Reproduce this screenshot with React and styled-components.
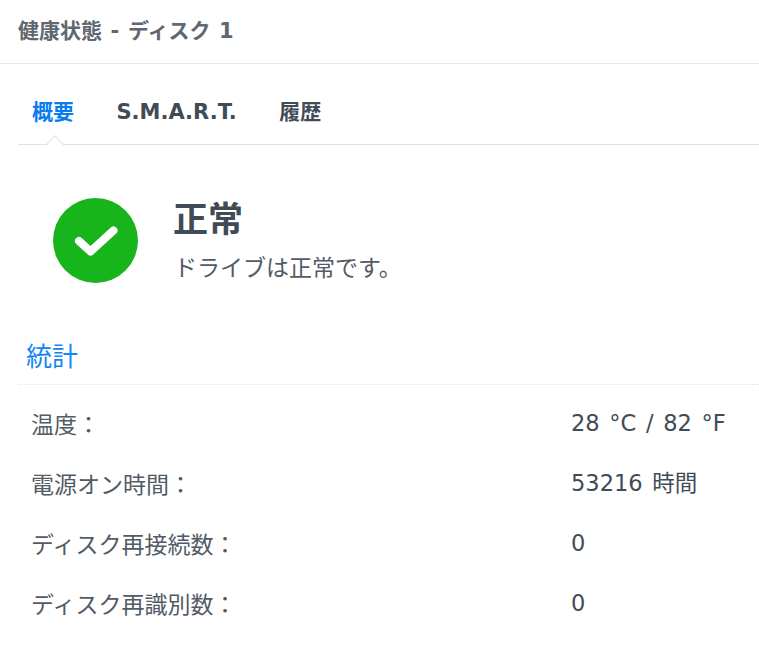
import React from 'react';
import styled, { createGlobalStyle } from 'styled-components';

const GlobalStyle = createGlobalStyle`
  html, body {
    margin: 0;
    padding: 0;
    background: #fff;
    overflow: hidden;
  }
  body {
    font-family: "DejaVu Sans", "Noto Sans CJK JP", sans-serif;
    color: #414b55;
  }
`;

const Page = styled.div`
  width: 759px;
  height: 645px;
  overflow: hidden;
`;

const Header = styled.div`
  height: 58px;
  padding: 0 0 5px 18px;
  display: flex;
  align-items: center;
  border-bottom: 1px solid #e3e8ef;
  font-size: 21px;
  font-weight: 700;
  word-spacing: 1.3px;
  color: #5f6770;
`;

const Body = styled.div`
  padding-left: 18px;
`;

const Tabs = styled.div`
  height: 81px;
  display: flex;
  align-items: flex-end;
  gap: 42.5px;
  padding: 0 0 20px 14px;
  box-sizing: border-box;
  border-bottom: 1px solid #d9e2ec;
  position: relative;
`;

const Tab = styled.div`
  font-size: 21px;
  line-height: 24px;
  font-weight: 700;
  color: ${p => (p.$active ? '#0a7cf0' : '#414b55')};
`;

const Caret = styled.span`
  position: absolute;
  left: 30px;
  bottom: -1px;
  width: 14px;
  height: 14px;
  transform: translateY(7px) rotate(45deg) scale(0.98);
  background: #fff;
  border-left: 1px solid #d9e2ec;
  border-top: 1px solid #d9e2ec;
  box-sizing: border-box;
`;

const Status = styled.div`
  display: flex;
  align-items: center;
  gap: 35px;
  padding: 53px 0 0 35px;
`;

const StatusText = styled.div`
  display: flex;
  flex-direction: column;
`;

const StatusTitle = styled.div`
  font-family: "Noto Sans CJK JP", sans-serif;
  font-size: 35px;
  line-height: 46px;
  font-weight: 700;
  color: #414b55;
  margin-top: -7px;
`;

const StatusDesc = styled.div`
  font-family: "Noto Sans CJK JP", sans-serif;
  font-size: 23px;
  line-height: 30px;
  color: #525b66;
  margin-top: 11px;
  margin-left: 1px;
`;

const SectionTitle = styled.div`
  margin-top: 52px;
  height: 50px;
  padding-left: 8px;
  font-family: "Noto Sans CJK JP", sans-serif;
  font-size: 26px;
  line-height: 40px;
  color: #1286f5;
  box-sizing: border-box;
  border-bottom: 1px dotted #dfe4e8;
`;

const Rows = styled.div`
  padding: 8px 0 0 13px;
`;

const Row = styled.div`
  display: grid;
  grid-template-columns: 540px 1fr;
  height: 60px;
  align-items: center;
  color: #414b55;
`;

const Label = styled.div`
  font-family: "Noto Sans CJK JP", sans-serif;
  font-size: 23px;
  color: #525b66;
`;

const Value = styled.div`
  font-size: 22.5px;
  line-height: 30px;
  word-spacing: 2.5px;
  margin-top: -1px;
`;

const rows = [
  ['温度：', '28 °C / 82 °F'],
  ['電源オン時間：', '53216 時間'],
  ['ディスク再接続数：', '0'],
  ['ディスク再識別数：', '0'],
];

const App = () => (
  <Page>
    <GlobalStyle />
    <Header>健康状態 - ディスク 1</Header>
    <Body>
      <Tabs>
        <Tab $active>概要</Tab>
        <Tab>S.M.A.R.T.</Tab>
        <Tab>履歴</Tab>
        <Caret />
      </Tabs>
      <Status>
        <svg width="85" height="85" viewBox="0 0 85 85">
          <circle cx="42.5" cy="42.5" r="42.5" fill="#17b41c" />
          <path d="M26 43 L37.5 53.5 L60.5 32.5" fill="none" stroke="#fff" strokeWidth="8" strokeLinecap="round" strokeLinejoin="round" />
        </svg>
        <StatusText>
          <StatusTitle>正常</StatusTitle>
          <StatusDesc>ドライブは正常です。</StatusDesc>
        </StatusText>
      </Status>
      <SectionTitle>統計</SectionTitle>
      <Rows>
        {rows.map(([label, value]) => (
          <Row key={label}>
            <Label>{label}</Label>
            <Value>{value}</Value>
          </Row>
        ))}
      </Rows>
    </Body>
  </Page>
);

export default App;
